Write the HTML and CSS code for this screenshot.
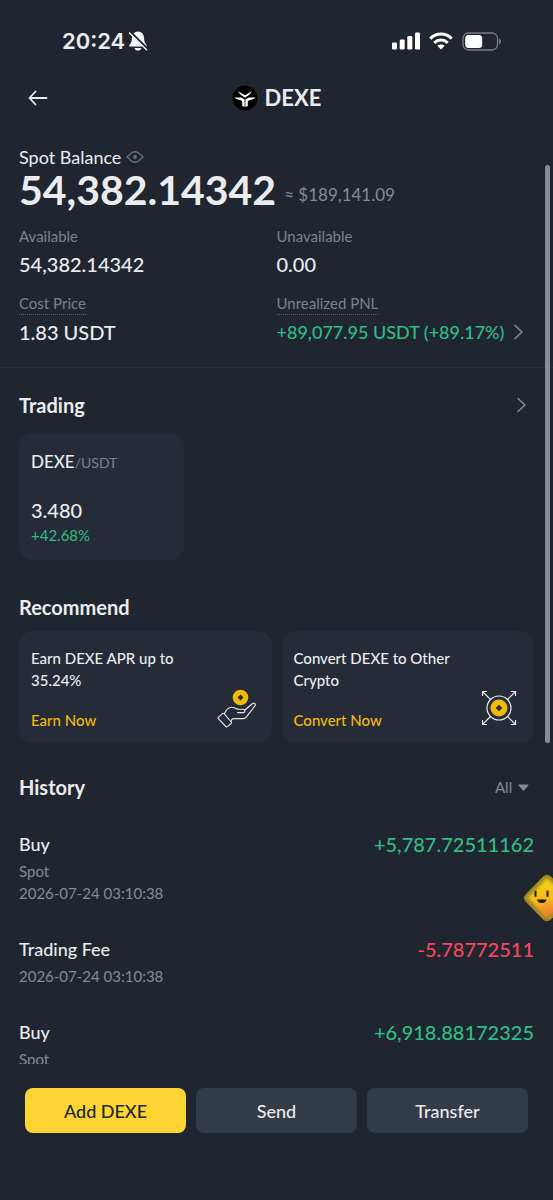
FILE: index.html
```html
<!DOCTYPE html>
<html lang="en">
<head>
<meta charset="utf-8">
<meta name="viewport" content="width=device-width, initial-scale=1">
<title>DEXE</title>
<link rel="stylesheet" href="styles.css">
</head>
<body>
<div class="screen">
  <div class="status">
    <div class="status-left">
      <span class="clock">20:24</span>
      <svg class="bell" width="20" height="20" viewBox="0 0 20 20" aria-hidden="true">
        <path d="M10 .6C6.200 .8 4 3.500 3.900 7.500C3.800 11 3 12 1.300 14.300V15.600H18.700V14.300C17 12 16.200 11 16.100 7.500C16 3.500 13.800 .8 10 .6ZM6.600 16.900H13.400C13 18.900 11.600 19.600 10 19.600S7 18.900 6.600 16.900Z" fill="#f4f6fa"/>
        <path d="M2.200 1.300L19 17.800" stroke="#202630" stroke-width="3"/>
        <path d="M1.500 2L18.600 18.700" stroke="#f4f6fa" stroke-width="1.400" stroke-linecap="round"/>
      </svg>
    </div>
    <div class="status-right">
      <svg width="28" height="18" viewBox="0 0 28 18" fill="#fff" aria-hidden="true">
        <rect x="0" y="10.500" width="5" height="7" rx="1.300"/><rect x="7.700" y="7.500" width="5" height="10" rx="1.300"/><rect x="15.300" y="4" width="5" height="13.500" rx="1.300"/><rect x="23" y="0.500" width="5" height="17" rx="1.300"/>
      </svg>
      <svg width="24" height="18" viewBox="0 0 24 18" fill="none" stroke="#fff" stroke-width="3" aria-hidden="true">
        <path d="M1.300 6.600C7.300 .6 16.700 .6 22.700 6.600"/><path d="M5.300 10.800C9.200 7.200 14.800 7.200 18.700 10.800"/>
        <path d="M12 17.500L8.300 13.800C10.400 12 13.600 12 15.700 13.800Z" fill="#fff" stroke="none"/>
      </svg>
      <svg width="40" height="19" viewBox="0 0 40 19" aria-hidden="true">
        <rect x="1" y="1" width="34.500" height="17" rx="5.500" fill="none" stroke="#777c85" stroke-width="1.300"/>
        <rect x="3.200" y="3" width="17" height="13" rx="3.500" fill="#fff"/><path d="M37 6.500C39.600 7.700 39.600 11.300 37 12.500Z" fill="#777c85"/>
      </svg>
    </div>
  </div>

  <header class="topbar">
    <button class="back" type="button" aria-label="Back">
      <svg width="20" height="16" viewBox="0 0 20 16" fill="none" stroke="#eaecef" stroke-width="1.800" stroke-linecap="round" stroke-linejoin="round"><path d="M18.500 8H1.500M7.500 1.500L1.500 8L7.500 14.500"/></svg>
    </button>
    <h1 class="coin">
      <svg width="26" height="26" viewBox="0 0 26 26" aria-hidden="true">
        <circle cx="13" cy="13" r="12.500" fill="#000"/>
        <path d="M5.800 6L13 10.300L20.200 6L17.300 9.800L13 12.800L8.700 9.800Z" fill="#fff"/>
        <path d="M2.600 12.500H9.200L12.600 14.600V22L10.200 21V16.200L8.200 14.900C6 14.900 4.300 14.300 2.600 12.500ZM23.400 12.500H16.800L13.400 14.600V22L15.800 21V16.200L17.800 14.900C20 14.900 21.700 14.300 23.400 12.500Z" fill="#fff"/>
      </svg>
      DEXE
    </h1>
  </header>

  <main class="content">
    <section class="balance">
      <div class="balance-title">Spot Balance
        <button class="plain" type="button" aria-label="Hide balance"><svg width="18" height="12" viewBox="0 0 18 12" fill="none" stroke="#69717e" stroke-width="1.400" stroke-linejoin="round"><path d="M1 6L5.500 2Q9-.4 12.500 2L17 6L12.500 10Q9 12.400 5.500 10Z"/><circle cx="9" cy="6" r="1.900" fill="#69717e" stroke="none"/></svg></button>
      </div>
      <div class="total"><strong>54,382.14342</strong><span>≈ $189,141.09</span></div>
      <dl class="stats">
        <div><dt>Available</dt><dd>54,382.14342</dd></div>
        <div><dt>Unavailable</dt><dd>0.00</dd></div>
        <div><dt><span class="hint">Cost Price</span></dt><dd>1.83 USDT</dd></div>
        <div><dt><span class="hint">Unrealized PNL</span></dt><dd><a class="pnl up" href="#pnl">+89,077.95 USDT (+89.17%)<svg width="9" height="16" viewBox="0 0 9 16" class="chevron"><path d="M1 1.500L8 8L1 14.500"/></svg></a></dd></div>
      </dl>
    </section>

    <section class="trading">
      <div class="section-head"><h2>Trading</h2><a class="more" href="#trading" aria-label="All trading pairs"><svg width="9" height="16" viewBox="0 0 9 16" class="chevron"><path d="M1 1.500L8 8L1 14.500"/></svg></a></div>
      <a class="card pair" href="#pair">
        <span class="pair-name">DEXE<small>/USDT</small></span>
        <span class="price">3.480</span>
        <span class="change up">+42.68%</span>
      </a>
    </section>

    <section class="recommend">
      <h2>Recommend</h2>
      <div class="offers">
        <article class="card offer">
          <p>Earn DEXE APR up to 35.24%</p>
          <a href="#earn">Earn Now</a>
          <svg class="offer-icon" width="40" height="40" viewBox="0 0 40 40" fill="none" stroke="#e6e8ec" stroke-width="1.100" stroke-linejoin="round" stroke-linecap="round" aria-hidden="true">
            <circle cx="23.500" cy="9.500" r="7.800" fill="#f0b90b" stroke="none"/>
            <path d="M23.500 6.500L26.500 9.500L23.500 12.500L20.500 9.500Z" fill="#252b37" stroke="none"/>
            <path d="M1.400 29.300L5.500 25.600C6 25.200 6.600 25.200 7.100 25.700L14.200 34C14.600 34.500 14.600 35 14.100 35.500L10.400 38.600C9.900 39 9.300 39 8.800 38.500L1.300 30.700C.9 30.200 .9 29.700 1.400 29.300Z"/>
            <path d="M7.500 25.800C9.500 20.800 11.800 19 15 19.200C17.500 19.300 18.800 20.800 21 21.100L26 21.200C28.500 21.300 28.500 24.500 26 24.600H20.500M28 22L35.600 15.500C37.300 14.400 39.100 16.100 37.900 17.900L29.200 29.100C28.300 30.200 27.300 30.600 26 30.600H17C14.800 30.700 14 32 14.300 34"/>
          </svg>
        </article>
        <article class="card offer">
          <p>Convert DEXE to Other Crypto</p>
          <a href="#convert">Convert Now</a>
          <svg class="offer-icon" width="40" height="40" viewBox="0 0 40 40" fill="none" stroke="#e6e8ec" stroke-width="1.200" aria-hidden="true">
            <circle cx="20" cy="20" r="12"/><circle cx="20" cy="20" r="8.500" fill="#f0b90b" stroke="none"/>
            <path d="M20 16.700L23.300 20L20 23.300L16.700 20Z" fill="#252b37" stroke="none"/>
            <path d="M11.500 11.500L3.500 3.500M3.500 8V3.500H8M28.500 11.500L36.500 3.500M32 3.500H36.500V8M11.500 28.500L3.500 36.500M3.500 32V36.500H8M28.500 28.500L36.500 36.500M32 36.500H36.500V32"/>
          </svg>
        </article>
      </div>
    </section>

    <section class="history">
      <div class="section-head">
        <h2>History</h2>
        <div class="filter">
          <select aria-label="History type"><option>All</option></select>
          <svg width="11" height="7" viewBox="0 0 11 7" aria-hidden="true"><path d="M1 .5H10Q11 .8 10.300 1.600L6.200 6.200Q5.500 6.900 4.800 6.200L.7 1.600Q0 .8 1 .5Z" fill="#848b96"/></svg>
        </div>
      </div>
      <ul class="records">
        <li><div class="record-line"><b>Buy</b><span class="up">+5,787.72511162</span></div><p>Spot</p><p><time>2026-07-24 03:10:38</time></p></li>
        <li><div class="record-line"><b>Trading Fee</b><span class="down">-5.78772511</span></div><p><time>2026-07-24 03:10:38</time></p></li>
        <li><div class="record-line"><b>Buy</b><span class="up">+6,918.88172325</span></div><p>Spot</p></li>
      </ul>
    </section>
  </main>

  <footer class="actions">
    <button class="primary" type="button">Add DEXE</button>
    <button type="button">Send</button>
    <button type="button">Transfer</button>
  </footer>

  <div class="scroll-thumb"></div>
  <button class="mascot" type="button" aria-label="Assistant">
    <svg width="30" height="50" viewBox="0 0 30 50" aria-hidden="true">
      <defs>
        <linearGradient id="face" x1=".35" y1="0" x2=".6" y2="1"><stop offset=".2" stop-color="#f3cf12"/><stop offset=".55" stop-color="#f7b71b"/><stop offset=".8" stop-color="#f28a2b"/></linearGradient>
        <filter id="soft"><feGaussianBlur stdDeviation="1.500"/></filter>
      </defs>
      <path d="M20.500 3.500Q24 .5 27.500 3.500L49 25L27.500 46.500Q24 49.500 20.500 46.500L2.500 28Q0 25 2.500 22Z" fill="#a38a24" stroke="#8c792f"/>
      <path d="M24 5L44 25L24 45L5 25Z" fill="url(#face)" filter="url(#soft)"/>
      <path d="M12.500 18.500V23M24.500 18.500V23" stroke="#21190a" stroke-width="2" stroke-linecap="round"/>
      <path d="M14 26.500H23.500Q22.800 30 18.800 30T14 26.500Z" fill="#21190a"/>
    </svg>
  </button>
</div>
</body>
</html>
```
FILE: styles.css
```css
* { box-sizing: border-box; }
body {
  margin: 0;
  background: #202630;
  color: #eaecef;
  font: 15px/22px Lato, "Noto Sans", sans-serif;
}
h1, h2, p, dl, dd, ul { margin: 0; padding: 0; }
a { color: inherit; text-decoration: none; }
button, select { font: inherit; color: inherit; border: 0; background: none; padding: 0; }
svg { display: block; flex: none; }
.up { color: #2ebd85; }
.down { color: #f6465d; }
.chevron { fill: none; stroke: #848b96; stroke-width: 1.6; stroke-linecap: round; stroke-linejoin: round; }

.screen {
  position: relative;
  display: flex;
  flex-direction: column;
  height: 100vh;
  overflow: hidden;
}
.status {
  display: flex;
  justify-content: space-between;
  padding: 26px 51px 0 62px;
  line-height: 30px;
}
.status-left, .status-right { display: flex; align-items: center; }
.status-left { gap: 3px; }
.status-right { gap: 9px; }
.clock { font: 600 22px/30px Inter, sans-serif; }

.topbar {
  display: grid;
  grid-template-columns: 32px 1fr 32px;
  align-items: center;
  margin-top: 26px;
  padding: 0 28px;
}
.coin {
  display: flex;
  justify-content: center;
  align-items: center;
  gap: 7px;
  font-size: 22px;
  font-weight: 700;
  line-height: 32px;
}

.content { flex: 1; min-height: 0; overflow: hidden; padding-top: 32px; }
.balance { padding: 0 19px 18px; border-bottom: 1px solid #2a303b; }
.balance-title { display: flex; align-items: center; gap: 5px; font-size: 18px; line-height: 22px; }
.total { display: flex; align-items: flex-end; gap: 8px; line-height: 44px; }
.total strong { font-size: 41px; font-weight: 700; }
.total span { color: #848b96; font-size: 17px; line-height: 34px; }
.stats { display: grid; grid-template-columns: 1fr 1fr; row-gap: 11px; margin-top: 13px; }
.stats dt { color: #7b828d; line-height: 22px; }
.stats dd { font-size: 20px; font-weight: 500; line-height: 34px; white-space: nowrap; }
.stats .pnl { display: flex; align-items: center; gap: 10px; font-size: 18px; }
.hint { display: inline-block; border-bottom: 1px dotted #5b626e; line-height: 21px; }

h2 { font-size: 20px; font-weight: 700; line-height: 30px; }
.section-head { display: flex; align-items: center; justify-content: space-between; }
.trading { padding: 22px 19px 0; }
.more { padding-right: 8px; }
.card { background: #252b37; border-radius: 14px; }
.pair {
  display: flex;
  flex-direction: column;
  width: 32%;
  margin-top: 13px;
  padding: 17px 12px 14px;
}
.pair-name { font-size: 17px; font-weight: 500; line-height: 24px; }
.pair-name small { color: #7b828d; font-size: 14px; font-weight: 400; }
.price { margin-top: 21px; font-size: 20px; font-weight: 500; line-height: 28px; }

.recommend { padding: 32px 19px 0; }
.offers { display: grid; grid-template-columns: 1fr 1fr; gap: 10px; margin-top: 9px; }
.offer {
  display: grid;
  grid-template-columns: 1fr 40px;
  padding: 16px 15px 12px 12px;
  font-weight: 500;
}
.offer p { grid-column: 1 / 3; padding-right: 60px; }
.offer a { margin-top: 18px; color: #f0b90b; }
.offer-icon { align-self: end; margin-top: -4px; margin-bottom: 3px; }

.history { padding: 29px 19px 0; }
.filter { display: flex; align-items: center; gap: 5px; padding-right: 5px; color: #848b96; }
.filter select { appearance: none; outline: 0; }
.records { list-style: none; margin-top: 28px; display: grid; gap: 31px; }
.record-line { display: flex; justify-content: space-between; margin-bottom: 2px; line-height: 28px; }
.record-line b { font-size: 18px; font-weight: 500; }
.record-line span { font-size: 20px; font-weight: 500; }
.records p { color: #848b96; }

.actions { display: grid; grid-template-columns: repeat(3, 1fr); gap: 10px; padding: 24px 25px 67px; }
.actions button { height: 45px; border-radius: 8px; background: #333b47; font-size: 18px; font-weight: 500; }
.actions .primary { background: #fcd535; color: #202630; }

.scroll-thumb { position: absolute; top: 165px; right: 3px; width: 5px; height: 578px; border-radius: 3px; background: #878b96; }
.mascot { position: absolute; top: 873px; right: 0; overflow: hidden; }
```
